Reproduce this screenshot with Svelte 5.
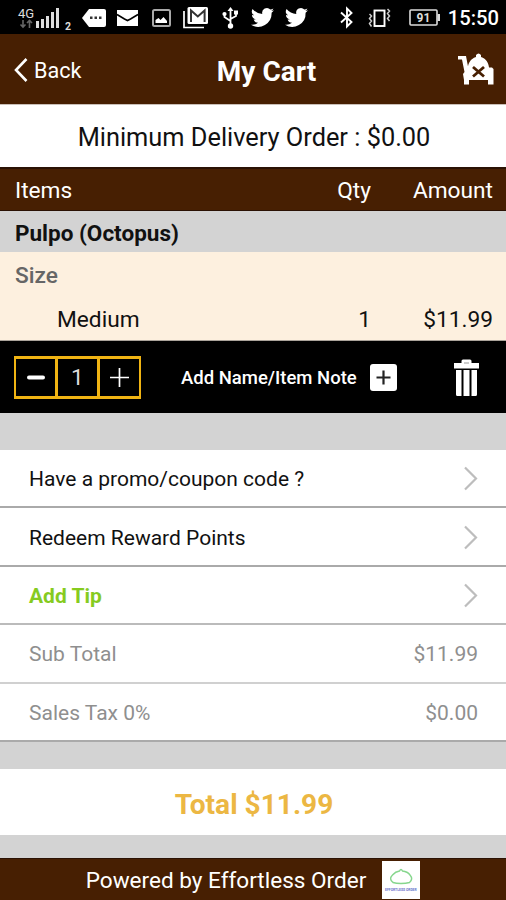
<script lang="ts">
    let quantity = $state(1);
    const price = 11.99;

    const links = [
        { label: 'Have a promo/coupon code ?', kind: '' },
        { label: 'Redeem Reward Points', kind: '' },
        { label: 'Add Tip', kind: 'tip' }
    ];

    let total = $derived('$' + (price * quantity).toFixed(2));

    function changeQuantity(step: number) {
        quantity = Math.max(1, quantity + step);
    }
</script>

{#snippet bird()}
    <svg class="bird" viewBox="1 3 22 19" preserveAspectRatio="none">
        <path d="M23 5.2a9 9 0 0 1-2.6.7 4.5 4.5 0 0 0 2-2.5 9 9 0 0 1-2.9 1.1 4.5 4.5 0 0 0-7.7 4.1A12.8 12.8 0 0 1 2.5 3.9a4.5 4.5 0 0 0 1.4 6 4.5 4.5 0 0 1-2-.6c0 2.2 1.5 4 3.6 4.5a4.5 4.5 0 0 1-2 .1 4.5 4.5 0 0 0 4.2 3.1A9 9 0 0 1 1 18.9 12.8 12.8 0 0 0 20.7 7.5 9 9 0 0 0 23 5.2z" fill="#fff" />
    </svg>
{/snippet}

<div class="screen">
    <div class="status">
        <svg class="signal" width="56" height="28" viewBox="0 0 56 28">
            <text x="0" y="13.5" class="net">4G</text>
            <path d="M5 16v7M2.5 20.5 5 23l2.500-2.500M11.500 24v-7M9 19l2.500-2.500L14 19" stroke="#666" stroke-width="1.6" fill="none" />
            <path d="M18 17h3v7h-3zM23 15h3v9h-3zM28 12h3v12h-3zM33 8h3v16h-3zM38 4h3v20h-3z" fill="#ddd" />
            <text x="47" y="26" class="sim">2</text>
        </svg>
        <svg class="message" width="25" height="20" viewBox="0 0 25 20">
            <path d="M7 1h15q2 0 2 2v14q0 2-2 2H7L0 10z" fill="#fff" />
            <path d="M8 8.5h2.5V11H8zM12.5 8.5H15V11h-2.500zM17 8.5h2.500V11H17z" fill="#333" />
        </svg>
        <svg class="mail" width="21" height="16" viewBox="0 0 21 16">
            <path d="M0 0h21v16H0z" fill="#fff" />
            <path d="M0 4.5 7.5 9 10.5 10.500 13.500 9 21 4.500" stroke="#000" stroke-width="1.6" fill="none" />
        </svg>
        <svg class="image" width="19" height="18" viewBox="0 0 19 18">
            <rect x="1" y="1" width="17" height="16" rx="1.5" fill="none" stroke="#aaa" stroke-width="2" />
            <path d="M3.5 14v-3l3-2 2 2 3-3 3.500 4v2z" fill="#fff" />
        </svg>
        <svg class="gmail" width="25" height="22" viewBox="0 0 25 22">
            <path d="M1 4v16.500h20" fill="none" stroke="#fff" stroke-width="1.7" />
            <rect x="4.5" y="0" width="20.5" height="17" rx="1.5" fill="#fff" />
            <path d="M8 15V3.500l6.800 6 6.800-6V15" fill="none" stroke="#333" stroke-width="2" />
        </svg>
        <svg class="usb" width="17" height="22" viewBox="0 0 17 22">
            <path d="M8.5 3v15M8.5 14 2.5 10V7M8.5 12l5.500-3V6" fill="none" stroke="#fff" stroke-width="1.8" />
            <path d="m8.5 0 3 4h-6zM12 3.500h4v4h-4z" fill="#fff" />
            <circle cx="2.5" cy="7" r="2.1" fill="#fff" />
            <circle cx="8.5" cy="19" r="2.7" fill="#fff" />
        </svg>
        {@render bird()}
        {@render bird()}
        <svg class="bluetooth" width="14" height="21" viewBox="0 0 14 21">
            <path d="m1 5.500 10.500 9.500L7 19.500v-18L11.500 6 1 15.500" fill="none" stroke="#fff" stroke-width="1.9" />
        </svg>
        <svg class="vibrate" width="23" height="20" viewBox="0 0 23 20">
            <rect x="6.5" y="2.5" width="10" height="15.5" fill="none" stroke="#fff" stroke-width="1.9" />
            <path d="m1.500 6 2 2-2 2.500 2 2.500-2 2.500 2 3M19.500 1l2 2-2 2.500 2 2.500-2 2.500 2 2.500" fill="none" stroke="#ccc" stroke-width="1.5" />
        </svg>
        <svg class="battery" width="31" height="17" viewBox="0 0 31 17">
            <rect x="1" y="1" width="27" height="15" rx="1" fill="none" stroke="#ddd" stroke-width="1.6" />
            <path d="M28.5 5H31v7h-2.500z" fill="#ddd" />
            <text x="7.5" y="13" class="charge">91</text>
        </svg>
        <span class="clock">15:50</span>
    </div>

    <header>
        <button class="back">
            <svg width="14" height="25" viewBox="0 0 14 25">
                <path d="M12.5 1 2 12l10.500 11" fill="none" stroke="#fff" stroke-width="2.6" />
            </svg>
            Back
        </button>
        <h1>My Cart</h1>
        <button class="clear" aria-label="Clear cart">
            <svg width="36" height="32" viewBox="0 0 36 32">
                <path d="M0 3h8l2 10.500c.500-3 2-7.500 8-9.500V2q2.500-3 5 0v2c5.500 2 7.500 6 8 10.500h3l1.500 1.500v15.500H30V27H11v4.500H6V27l-1-6 1.500-2L4 6.500H0z" fill="#fff" />
                <path d="m15 14 11 9.500M26 14l-11 9.500" stroke="#471f02" stroke-width="2.8" />
            </svg>
        </button>
    </header>

    <div class="minimum">Minimum Delivery Order : $0.00</div>

    <div class="columns line">
        <span>Items</span>
        <span class="qty">Qty</span>
        <span class="amount">Amount</span>
    </div>
    <div class="item-name">Pulpo (Octopus)</div>
    <div class="options">
        <div class="group">Size</div>
        <div class="option line">
            <span class="choice">Medium</span>
            <span class="qty">{quantity}</span>
            <span class="amount">{total}</span>
        </div>
    </div>

    <div class="actions">
        <div class="stepper">
            <button aria-label="Decrease" onclick={() => changeQuantity(-1)}>
                <svg width="20" height="20" viewBox="0 0 20 20"><path d="M3 9.500h14" stroke="#fff" stroke-width="4" stroke-linecap="round" /></svg>
            </button>
            <span>{quantity}</span>
            <button aria-label="Increase" onclick={() => changeQuantity(1)}>
                <svg width="20" height="20" viewBox="0 0 20 20"><path d="M0 9.500h19M9.500 0v19" stroke="#fff" stroke-width="1.7" /></svg>
            </button>
        </div>
        <button class="note">
            Add Name/Item Note
            <svg width="27" height="27" viewBox="0 0 27 27">
                <rect width="27" height="27" rx="3" fill="#fff" />
                <path d="M6.5 13.500h14M13.500 6.500v14" stroke="#222" stroke-width="2.2" />
            </svg>
        </button>
        <button class="trash" aria-label="Remove item">
            <svg width="25" height="37" viewBox="0 0 25 37">
                <path d="M0 4h7.500V2q0-1.500 1.500-1.500h7q1.500 0 1.500 1.500v2H25v5.500H0zM2 11h5.500v26H3.500Q2 37 2 35.500zM9.500 11h6v26h-6zM17.500 11H23v24.500q0 1.500-1.500 1.500h-4z" fill="#fff" />
                <path d="M10 4h5" stroke="#bbb" stroke-width="1.5" />
            </svg>
        </button>
    </div>

    <div class="rows">
        {#each links as link}
            <button class="row {link.kind}">
                <span>{link.label}</span>
                <svg width="14" height="24" viewBox="0 0 14 24">
                    <path d="m1 .5 11 11-11 11" fill="none" stroke="#bdbdbd" stroke-width="2.2" />
                </svg>
            </button>
        {/each}
        <div class="row muted light">
            <span>Sub Total</span>
            <span>{total}</span>
        </div>
        <div class="row muted">
            <span>Sales Tax 0%</span>
            <span>$0.00</span>
        </div>
    </div>

    <div class="total">Total {total}</div>

    <footer>
        <span>Powered by Effortless Order</span>
        <svg width="38" height="38" viewBox="0 0 38 38">
            <rect width="38" height="38" fill="#fff" />
            <path d="M11 21.500q-4.500-3.500-.500-7.500 3-3.500 7-4 1.500-3 3 0 5 .5 7.500 4 3.500 4-.5 7.500-3.500 1-8.500 1t-8-1z" fill="none" stroke="#86d68d" stroke-width="1.4" />
            <text x="3" y="29.5" class="brand">EFFORTLESS ORDER</text>
        </svg>
    </footer>
</div>

<style>
    :global(body) {
        margin: 0;
        background: #d3d3d3;
    }

    .screen {
        width: 506px;
        height: 900px;
        display: flex;
        flex-direction: column;
        overflow: hidden;
        background: #d3d3d3;
        color: #111;
        font-family: Roboto, sans-serif;
        font-size: 22.7px;
    }

    button {
        padding: 0;
        border: none;
        background: none;
        color: inherit;
        font: inherit;
        cursor: pointer;
    }

    svg {
        display: block;
        flex: none;
        overflow: visible;
    }

    .status {
        height: 34px;
        box-sizing: border-box;
        display: flex;
        align-items: center;
        padding: 1px 7px 0 18px;
        background: #000;
        color: #fff;
    }

    .net {
        font-size: 13px;
        fill: #ddd;
    }

    .sim {
        font-size: 10.5px;
        font-weight: 700;
        fill: #ddd;
    }

    .signal {
        margin-right: 8px;
    }

    .message {
        margin-right: 10px;
    }

    .mail {
        margin-right: 14px;
    }

    .image {
        margin-right: 12px;
    }

    .gmail {
        margin: 1px 14px 0 0;
    }

    .usb {
        margin-right: 12px;
    }

    .bird {
        width: 23px;
        height: 20px;
        margin-right: 11px;
    }

    .bluetooth {
        margin: 0 14px 0 21px;
    }

    .vibrate {
        margin-right: 18px;
    }

    .charge {
        font-size: 12px;
        font-weight: 700;
        fill: #ddd;
    }

    .clock {
        margin-left: auto;
        padding-top: 1px;
        font-size: 20.2px;
        font-weight: 500;
    }

    header {
        height: 70px;
        display: grid;
        grid-template-columns: 150px 1fr 150px;
        align-items: center;
        background: #471f02;
        color: #fff;
    }

    .back {
        display: flex;
        align-items: center;
        gap: 6px;
        padding: 3px 0 0 14px;
        font-size: 21.6px;
    }

    h1 {
        margin: 4px 0 0 27px;
        font-size: 28px;
        font-weight: 700;
        text-align: center;
        white-space: nowrap;
    }

    .clear {
        justify-self: end;
        padding-right: 12px;
    }

    .minimum {
        height: 63px;
        display: flex;
        align-items: center;
        justify-content: center;
        padding: 1px 0 0 2px;
        box-sizing: border-box;
        border-top: 1px solid #c9bfb8;
        background: #fff;
        font-size: 25.35px;
    }

    .line {
        display: grid;
        grid-template-columns: 1fr 60px 122px;
        align-items: center;
        padding: 0 13px 0 15px;
    }

    .columns {
        height: 44px;
        box-sizing: border-box;
        padding-top: 2px;
        border-top: 2px solid #2b1204;
        border-bottom: 1px solid #2b1204;
        background: #471f02;
        color: #fff;
    }

    .qty,
    .amount {
        text-align: right;
    }

    .item-name {
        height: 41px;
        display: flex;
        align-items: center;
        padding: 3px 14px 0 15px;
        box-sizing: border-box;
        font-size: 22.5px;
        font-weight: 700;
    }

    .options {
        height: 89px;
        box-sizing: border-box;
        padding-top: 1px;
        border-bottom: 1px solid #aaa39a;
        background: #fdf0df;
    }

    .group {
        height: 44px;
        display: flex;
        align-items: center;
        padding-left: 15px;
        color: #666;
        font-weight: 500;
    }

    .option {
        height: 44px;
    }

    .choice {
        padding-left: 42px;
    }

    .actions {
        height: 72px;
        display: flex;
        align-items: center;
        padding: 1px 27px 0 14px;
        box-sizing: border-box;
        background: #000;
        color: #fff;
    }

    .stepper {
        width: 127px;
        height: 43px;
        box-sizing: border-box;
        display: grid;
        grid-template-columns: 1fr 1fr 1fr;
        gap: 3px;
        padding: 3px 2px;
        background: #f0b413;
    }

    .stepper > * {
        display: flex;
        align-items: center;
        justify-content: center;
        background: #000;
        color: #ddd;
    }

    .note {
        display: flex;
        align-items: center;
        gap: 13px;
        margin-left: 40px;
        font-size: 18.5px;
        font-weight: 500;
        white-space: nowrap;
    }

    .trash {
        margin-left: auto;
    }

    .rows {
        margin-top: 37px;
    }

    .row {
        width: 100%;
        height: 58.4px;
        box-sizing: border-box;
        display: flex;
        align-items: center;
        justify-content: space-between;
        padding: 2px 28px 0 29px;
        border-bottom: 2px solid #aaa;
        background: #fff;
        font-size: 21px;
    }

    .tip {
        border-color: #bbb;
        color: #86cb1f;
        font-weight: 700;
    }

    .muted {
        color: #8f8f8f;
    }

    .light {
        border-color: #d0d0d0;
    }

    .total {
        height: 66px;
        display: flex;
        align-items: center;
        justify-content: center;
        margin: 27px 0 23px;
        padding: 5px 0 0 2px;
        box-sizing: border-box;
        background: #fff;
        color: #ecb743;
        font-size: 28.1px;
        font-weight: 700;
    }

    footer {
        height: 42px;
        display: flex;
        align-items: center;
        justify-content: center;
        gap: 16px;
        padding-top: 1px;
        box-sizing: border-box;
        border-top: 1px solid #2b1204;
        background: #471f02;
        color: #fff;
        font-size: 22.55px;
    }

    footer span {
        padding-top: 2px;
    }

    .brand {
        font-size: 3.4px;
        font-weight: 700;
        fill: #6b76cc;
    }
</style>
